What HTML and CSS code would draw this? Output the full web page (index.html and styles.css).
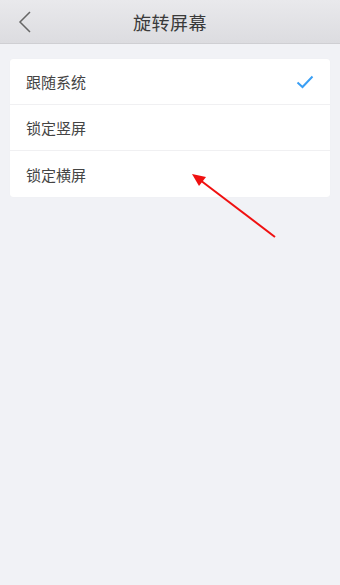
FILE: index.html
```html
<!DOCTYPE html>
<html lang="zh">
<head>
<meta charset="utf-8">
<link rel="stylesheet" href="styles.css">
</head>
<body>
<div class="page">
  <header class="bar">
    <svg class="back" width="14" height="24" viewBox="0 0 14 24"><path d="M12 2 L2 12 L12 22" fill="none" stroke="#666" stroke-width="1.5"/></svg>
    <h1 class="title">旋转屏幕</h1>
  </header>
  <main class="content">
    <ul class="card">
      <li class="row"><span>跟随系统</span>
        <svg class="check" width="18" height="14" viewBox="0 0 18 14"><path d="M1.5 7.5 L6.5 12 L16.5 1.5" fill="none" stroke="#3a9ff5" stroke-width="2"/></svg>
      </li>
      <li class="row"><span>锁定竖屏</span></li>
      <li class="row"><span>锁定横屏</span></li>
    </ul>
  </main>
  <svg class="arrow" width="340" height="585" viewBox="0 0 340 585">
    <line x1="275" y1="237" x2="200" y2="180" stroke="#f01010" stroke-width="2"/>
    <polygon points="192,174 206,177 199,186" fill="#f01010"/>
  </svg>
</div>
</body>
</html>
```
FILE: styles.css
```css
* { box-sizing: border-box; margin: 0; padding: 0; }
html, body { width: 340px; height: 585px; overflow: hidden; }
body { background: #f1f2f6; font-family: "Noto Sans CJK SC", "Noto Sans", sans-serif; }
.page { position: relative; width: 340px; height: 585px; }
.bar {
  height: 44px;
  background: linear-gradient(#e9e9ec, #dcdce0);
  border-bottom: 1px solid #cfcfd3;
  display: flex; align-items: center; justify-content: center;
  position: relative;
}
.back { position: absolute; left: 18px; top: 10px; }
.title { font-size: 18px; font-weight: normal; color: #3a3a3a; letter-spacing: 0.5px; }
.content { padding: 15px 10px; }
.card { list-style: none; background: #fff; border-radius: 3px; box-shadow: 0 0 1px rgba(0,0,0,0.06); }
.row {
  height: 46px; display: flex; align-items: center; justify-content: space-between;
  padding: 0 16px; font-size: 15px; color: #444;
  border-bottom: 1px solid #f0f0f2;
}
.row:last-child { border-bottom: none; }
.arrow { position: absolute; left: 0; top: 0; pointer-events: none; }
```
